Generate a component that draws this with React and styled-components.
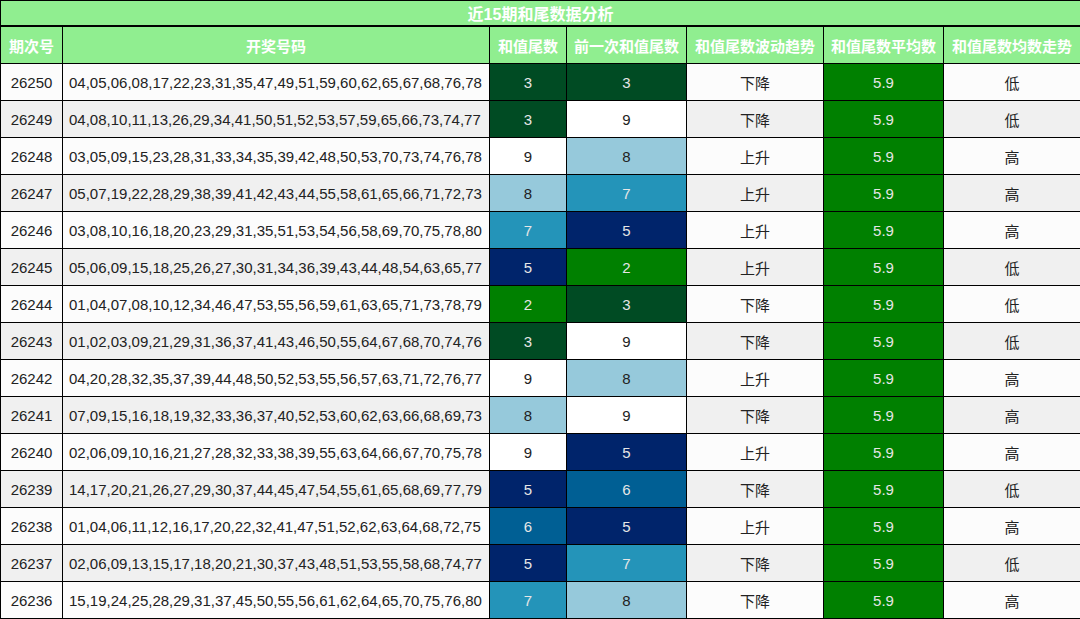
import React from 'react';
import styled, { createGlobalStyle } from 'styled-components';

const GlobalStyle = createGlobalStyle`
  html, body {
    margin: 0;
    padding: 0;
    background: #ffffff;
  }
  body {
    font-family: "Liberation Sans", "Noto Sans CJK SC", sans-serif;
  }
`;

const rows = [
  ['26250', '04,05,06,08,17,22,23,31,35,47,49,51,59,60,62,65,67,68,76,78', 3, 3, '下降', '低'],
  ['26249', '04,08,10,11,13,26,29,34,41,50,51,52,53,57,59,65,66,73,74,77', 3, 9, '下降', '低'],
  ['26248', '03,05,09,15,23,28,31,33,34,35,39,42,48,50,53,70,73,74,76,78', 9, 8, '上升', '高'],
  ['26247', '05,07,19,22,28,29,38,39,41,42,43,44,55,58,61,65,66,71,72,73', 8, 7, '上升', '高'],
  ['26246', '03,08,10,16,18,20,23,29,31,35,51,53,54,56,58,69,70,75,78,80', 7, 5, '上升', '高'],
  ['26245', '05,06,09,15,18,25,26,27,30,31,34,36,39,43,44,48,54,63,65,77', 5, 2, '上升', '低'],
  ['26244', '01,04,07,08,10,12,34,46,47,53,55,56,59,61,63,65,71,73,78,79', 2, 3, '下降', '低'],
  ['26243', '01,02,03,09,21,29,31,36,37,41,43,46,50,55,64,67,68,70,74,76', 3, 9, '下降', '低'],
  ['26242', '04,20,28,32,35,37,39,44,48,50,52,53,55,56,57,63,71,72,76,77', 9, 8, '上升', '高'],
  ['26241', '07,09,15,16,18,19,32,33,36,37,40,52,53,60,62,63,66,68,69,73', 8, 9, '下降', '高'],
  ['26240', '02,06,09,10,16,21,27,28,32,33,38,39,55,63,64,66,67,70,75,78', 9, 5, '上升', '高'],
  ['26239', '14,17,20,21,26,27,29,30,37,44,45,47,54,55,61,65,68,69,77,79', 5, 6, '下降', '低'],
  ['26238', '01,04,06,11,12,16,17,20,22,32,41,47,51,52,62,63,64,68,72,75', 6, 5, '上升', '高'],
  ['26237', '02,06,09,13,15,17,18,20,21,30,37,43,48,51,53,55,58,68,74,77', 5, 7, '下降', '低'],
  ['26236', '15,19,24,25,28,29,31,37,45,50,55,56,61,62,64,65,70,75,76,80', 7, 8, '下降', '高'],
];

const tailColors = {
  2: { bg: '#008000', fg: '#e6e6e6' },
  3: { bg: '#004b23', fg: '#e6e6e6' },
  5: { bg: '#00246b', fg: '#e6e6e6' },
  6: { bg: '#005f94', fg: '#e6e6e6' },
  7: { bg: '#2494b9', fg: '#e6e6e6' },
  8: { bg: '#96c9db', fg: '#222222' },
  9: { bg: '#ffffff', fg: '#222222' },
};

const Table = styled.table`
  width: 1080px;
  border-collapse: collapse;
  table-layout: fixed;
  font-size: 15px;
  color: #222222;
`;

const TitleCell = styled.th`
  height: 24px;
  padding: 0;
  background: #90ee90;
  color: #ffffff;
  font-weight: bold;
  font-size: 16px;
  border: 1px solid #000;
  border-bottom-width: 2px;
  text-align: center;
`;

const HeadCell = styled.th`
  height: 36px;
  padding: 0;
  background: #90ee90;
  color: #ffffff;
  font-weight: bold;
  font-size: 15px;
  border: 1px solid #000;
  white-space: nowrap;
  text-align: center;
`;

const Row = styled.tr`
  background: ${({ $odd }) => ($odd ? '#f0f0f0' : '#fcfcfc')};
`;

const Cell = styled.td`
  height: 36px;
  padding: 0 ${({ $left }) => ($left ? '6px' : '0')};
  border: 1px solid #000;
  text-align: ${({ $left }) => ($left ? 'left' : 'center')};
  white-space: nowrap;
  overflow: hidden;
  background: ${({ $bg }) => $bg || 'transparent'};
  color: ${({ $fg }) => $fg || '#222222'};
`;

const widths = [62, 427, 77, 120, 137, 120, 137];
const heads = ['期次号', '开奖号码', '和值尾数', '前一次和值尾数', '和值尾数波动趋势', '和值尾数平均数', '和值尾数均数走势'];

export default function App() {
  return (
    <>
      <GlobalStyle />
      <Table>
        <colgroup>
          {widths.map((w, i) => (
            <col key={i} style={{ width: w }} />
          ))}
        </colgroup>
        <thead>
          <tr>
            <TitleCell colSpan={7}>近15期和尾数据分析</TitleCell>
          </tr>
          <tr>
            {heads.map((h) => (
              <HeadCell key={h}>{h}</HeadCell>
            ))}
          </tr>
        </thead>
        <tbody>
          {rows.map(([issue, nums, tail, prev, trend, avgTrend], i) => (
            <Row key={issue} $odd={i % 2 === 1}>
              <Cell>{issue}</Cell>
              <Cell $left>{nums}</Cell>
              <Cell $bg={tailColors[tail].bg} $fg={tailColors[tail].fg}>{tail}</Cell>
              <Cell $bg={tailColors[prev].bg} $fg={tailColors[prev].fg}>{prev}</Cell>
              <Cell>{trend}</Cell>
              <Cell $bg="#008000" $fg="#e6e6e6">5.9</Cell>
              <Cell>{avgTrend}</Cell>
            </Row>
          ))}
        </tbody>
      </Table>
    </>
  );
}
